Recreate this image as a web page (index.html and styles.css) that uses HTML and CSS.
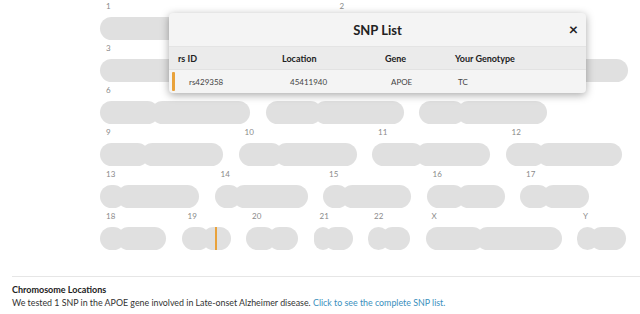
FILE: index.html
```html
<!doctype html>
<html lang="en">
  <head>
    <meta charset="UTF-8" />
    <meta name="viewport" content="width=device-width, initial-scale=1.0" />
    <title>Chromosome Locations</title>
    <link rel="stylesheet" href="styles.css">
  </head>
  <body>
    <div id="karyotype">
      <div class="chrom-row">
        <div class="chrom"><span class="chrom-label">1</span><div class="chrom-bar"><span class="arm" style="--w:113px"></span><span class="arm q" style="--w:113px"></span></div></div>
        <div class="chrom"><span class="chrom-label">2</span><div class="chrom-bar"><span class="arm" style="--w:85px"></span><span class="arm q" style="--w:135px"></span></div></div>
      </div>
      <div class="chrom-row">
        <div class="chrom"><span class="chrom-label">3</span><div class="chrom-bar"><span class="arm" style="--w:84px"></span><span class="arm q" style="--w:97px"></span></div></div>
        <div class="chrom"><span class="chrom-label">4</span><div class="chrom-bar"><span class="arm" style="--w:49px"></span><span class="arm q" style="--w:125px"></span></div></div>
        <div class="chrom"><span class="chrom-label">5</span><div class="chrom-bar"><span class="arm" style="--w:47px"></span><span class="arm q" style="--w:119px"></span></div></div>
      </div>
      <div class="chrom-row">
        <div class="chrom"><span class="chrom-label">6</span><div class="chrom-bar"><span class="arm" style="--w:59px"></span><span class="arm q" style="--w:99px"></span></div></div>
        <div class="chrom"><span class="chrom-label">7</span><div class="chrom-bar"><span class="arm" style="--w:56px"></span><span class="arm q" style="--w:90px"></span></div></div>
        <div class="chrom"><span class="chrom-label">8</span><div class="chrom-bar"><span class="arm" style="--w:46px"></span><span class="arm q" style="--w:90px"></span></div></div>
      </div>
      <div class="chrom-row">
        <div class="chrom"><span class="chrom-label">9</span><div class="chrom-bar"><span class="arm" style="--w:49px"></span><span class="arm q" style="--w:82px"></span></div></div>
        <div class="chrom"><span class="chrom-label">10</span><div class="chrom-bar"><span class="arm" style="--w:44px"></span><span class="arm q" style="--w:82px"></span></div></div>
        <div class="chrom"><span class="chrom-label">11</span><div class="chrom-bar"><span class="arm" style="--w:52px"></span><span class="arm q" style="--w:74px"></span></div></div>
        <div class="chrom"><span class="chrom-label">12</span><div class="chrom-bar"><span class="arm" style="--w:39px"></span><span class="arm q" style="--w:85px"></span></div></div>
      </div>
      <div class="chrom-row">
        <div class="chrom"><span class="chrom-label">13</span><div class="chrom-bar"><span class="arm" style="--w:25px"></span><span class="arm q" style="--w:82px"></span></div></div>
        <div class="chrom"><span class="chrom-label">14</span><div class="chrom-bar"><span class="arm" style="--w:26px"></span><span class="arm q" style="--w:75px"></span></div></div>
        <div class="chrom"><span class="chrom-label">15</span><div class="chrom-bar"><span class="arm" style="--w:26px"></span><span class="arm q" style="--w:70px"></span></div></div>
        <div class="chrom"><span class="chrom-label">16</span><div class="chrom-bar"><span class="arm" style="--w:38px"></span><span class="arm q" style="--w:48px"></span></div></div>
        <div class="chrom"><span class="chrom-label">17</span><div class="chrom-bar"><span class="arm" style="--w:30px"></span><span class="arm q" style="--w:47px"></span></div></div>
      </div>
      <div class="chrom-row">
        <div class="chrom"><span class="chrom-label">18</span><div class="chrom-bar"><span class="arm" style="--w:25px"></span><span class="arm q" style="--w:49px"></span></div></div>
        <div class="chrom"><span class="chrom-label">19</span><div class="chrom-bar"><span class="arm" style="--w:28px"></span><span class="arm q" style="--w:29px"></span><span class="snp-mark" style="left:33px"></span></div></div>
        <div class="chrom"><span class="chrom-label">20</span><div class="chrom-bar"><span class="arm" style="--w:30px"></span><span class="arm q" style="--w:30px"></span></div></div>
        <div class="chrom"><span class="chrom-label">21</span><div class="chrom-bar"><span class="arm" style="--w:18px"></span><span class="arm q" style="--w:29px"></span></div></div>
        <div class="chrom"><span class="chrom-label">22</span><div class="chrom-bar"><span class="arm" style="--w:21px"></span><span class="arm q" style="--w:29px"></span></div></div>
        <div class="chrom"><span class="chrom-label">X</span><div class="chrom-bar"><span class="arm" style="--w:58px"></span><span class="arm q" style="--w:86px"></span></div></div>
        <div class="chrom"><span class="chrom-label">Y</span><div class="chrom-bar"><span class="arm" style="--w:21px"></span><span class="arm q" style="--w:36px"></span></div></div>
      </div>
    </div>

    <div id="snp-modal">
      <div class="modal-header">
        <h3>SNP List</h3>
        <span class="modal-close">&times;</span>
      </div>
      <div class="snp-row snp-head">
        <span>rs ID</span>
        <span>Location</span>
        <span>Gene</span>
        <span>Your Genotype</span>
      </div>
      <div class="snp-row snp-data">
        <span class="snp-flag"></span>
        <span class="cell-rsid">rs429358</span>
        <span class="cell-loc">45411940</span>
        <span class="cell-gene">APOE</span>
        <span class="cell-geno">TC</span>
      </div>
    </div>

    <div id="summary">
      <h4>Chromosome Locations</h4>
      <p>We tested 1 SNP in the APOE gene involved in Late-onset Alzheimer disease. <a href="#">Click to see the complete SNP list.</a></p>
    </div>
  </body>
</html>
```

FILE: styles.css
```css
body {
  margin: 0;
  padding: 0;
  font-family: 'Lato', 'Open Sans', sans-serif;
  background: #fff;
  color: #333;
  position: relative;
  overflow: hidden;
}

#karyotype {
  padding: 1px 0 0 100px;
  display: flex;
  flex-direction: column;
  gap: 3px;
}

.chrom-row {
  display: flex;
  gap: 15.5px;
}

.chrom {
  display: flex;
  flex-direction: column;
}

.chrom-label {
  font-size: 8px;
  line-height: 11px;
  height: 11px;
  color: #8a8a8a;
  padding-left: 6px;
  margin-bottom: 5px;
}

.chrom-bar {
  position: relative;
  display: flex;
  height: 23px;
}

.arm {
  width: var(--w);
  height: 23px;
  border-radius: 11.5px;
  background: #e0e0e0;
  flex: none;
}

.arm.q {
  margin-left: -8px;
}

.snp-mark {
  position: absolute;
  top: 0;
  width: 2px;
  height: 23px;
  background: #e9a23b;
}

#snp-modal {
  position: absolute;
  top: 13px;
  left: 169px;
  width: 417px;
  height: 80px;
  background: #f4f4f4;
  border-radius: 4px;
  box-shadow: 0 2px 9px rgba(0, 0, 0, 0.35);
  overflow: hidden;
}

.modal-header {
  height: 33px;
  display: flex;
  align-items: center;
  justify-content: center;
  position: relative;
}

.modal-header h3 {
  margin: 0;
  font-size: 13px;
  font-weight: bold;
  color: #222;
  padding-top: 1px;
}

.modal-close {
  position: absolute;
  right: 8px;
  top: 8px;
  font-size: 16px;
  line-height: 16px;
  font-weight: bold;
  color: #222;
}

.snp-row {
  display: grid;
  grid-template-columns: 104px 103px 70px 1fr;
  align-items: center;
  padding-left: 9px;
  font-size: 8px;
}

.snp-head {
  height: 24px;
  background: #ebebeb;
  border-top: 1px solid #e4e4e4;
  border-bottom: 1px solid #e2e2e2;
  box-sizing: border-box;
  font-size: 9px;
  font-weight: bold;
  color: #222;
}

.snp-data {
  height: 23px;
  position: relative;
  color: #444;
}

.snp-flag {
  position: absolute;
  left: 3px;
  top: 2px;
  width: 3px;
  height: 19px;
  background: #e9a23b;
  border-radius: 1px;
}

.cell-rsid { padding-left: 11px; }
.cell-loc { padding-left: 8px; }
.cell-gene { padding-left: 6px; }
.cell-geno { padding-left: 3px; }

#summary {
  margin: 26px 0 0 12px;
  border-top: 1px solid #e6e6e6;
  padding-top: 7px;
}

#summary h4 {
  margin: 0;
  font-size: 9px;
  line-height: 12px;
  font-weight: bold;
  color: #222;
}

#summary p {
  margin: 1px 0 0 0;
  font-size: 8.85px;
  line-height: 12px;
  color: #333;
}

#summary a {
  color: #3a8fbd;
  text-decoration: none;
}
```
